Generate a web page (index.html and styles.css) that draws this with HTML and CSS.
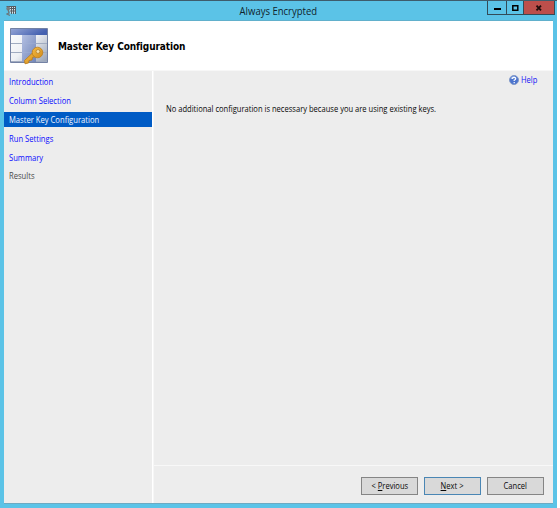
FILE: index.html
```
<!DOCTYPE html>
<html lang="en">
<head>
<meta charset="utf-8">
<title>Always Encrypted</title>
<link rel="stylesheet" href="styles.css">
</head>
<body>
<div class="window">
  <header class="titlebar">
    <svg class="app-icon" width="12" height="12" viewBox="0 0 12 12"><path d="M2.500 1h7v7.500h-5z" fill="#d8e4e8"/><path d="M.500 1.500h9.500M3 3.500h7M4 6h6M5.500 1v8M7.500 1v8M9.500 1v8" stroke="#555b60" fill="none"/><circle cx="2.200" cy="3.500" r="1.900" fill="#777e80"/><path d="M2 4l1 4-2 1 3 1.500" stroke="#6b777b" fill="none" stroke-width="1.300"/></svg>
    <h1 class="title"><span class="condensed">Always Encrypted</span></h1>
    <div class="controls">
      <span class="control"><svg width="8" height="8"><path d="M1 4h7v2H1z" fill="#000"/></svg></span>
      <span class="control maximize"><svg width="8" height="8"><path d="M1.800 1.800h5v4.400h-5z" fill="none" stroke="#000" stroke-width="1.500"/></svg></span>
      <span class="control close"><svg width="8" height="8"><path d="M1.500 1.700l4.500 4.600M6 1.700L1.500 6.300" stroke="#210b0a" stroke-width="1.900"/></svg></span>
    </div>
  </header>
  <div class="client">
    <div class="banner">
      <svg class="banner-icon" width="40" height="38" viewBox="0 0 40 38">
        <defs>
          <linearGradient id="head" x1="0" x2="1" y2=".3"><stop stop-color="#93a4d5"/><stop offset="1" stop-color="#4460b0"/></linearGradient>
          <linearGradient id="cells" gradientUnits="userSpaceOnUse" x2="38" y2="36"><stop stop-color="#fff"/><stop offset=".5" stop-color="#eef0f4"/><stop offset="1" stop-color="#929eb3"/></linearGradient>
          <linearGradient id="column" x2="1" y2="1"><stop stop-color="#b4c0e3"/><stop offset="1" stop-color="#7286b8"/></linearGradient>
          <linearGradient id="gold" x2="1" y2="1"><stop stop-color="#f6bd42"/><stop offset="1" stop-color="#d18a1b"/></linearGradient>
        </defs>
        <path d="M1.500 1.500h37v34h-37z" fill="#a0abc0" stroke="#7482a4"/>
        <path d="M2 2h36v6H2z" fill="url(#head)"/>
        <path d="M2 8h11v8H2zM2 17h11v8H2zM2 26h11v8H2zM27 8h11v8H27zM27 17h11v8H27zM27 26h11v8H27z" fill="url(#cells)"/>
        <path d="M13 8h14v27H13z" fill="url(#column)"/>
        <path d="M13 16.500h14M13 25.500h14" stroke="#a4b2d7" stroke-width=".4"/>
        <path d="M24 25.500L15.500 33.500l.5 3.300 3.500-.8.500-2.500 3-.5.500-2.500 4-1.500" fill="url(#gold)" stroke="#b97818" stroke-width=".8"/>
        <circle cx="28.500" cy="25.500" r="5.300" fill="url(#gold)" stroke="#bd7c19" stroke-width=".8"/>
        <circle cx="29" cy="24.500" r="1.900" fill="#f4e0ab" stroke="#a56b18" stroke-width=".6"/>
      </svg>
      <h2 class="heading">Master Key Configuration</h2>
    </div>
    <div class="body">
      <nav class="steps">
        <a class="step"><span class="condensed">Introduction</span></a>
        <a class="step"><span class="condensed">Column Selection</span></a>
        <a class="step active"><span class="condensed">Master Key Configuration</span></a>
        <a class="step"><span class="condensed">Run Settings</span></a>
        <a class="step"><span class="condensed">Summary</span></a>
        <a class="step disabled"><span class="condensed">Results</span></a>
      </nav>
      <main class="page">
        <div class="content">
          <a class="help"><svg width="10" height="10" viewBox="0 0 10 10"><circle cx="5" cy="5" r="4.500" fill="#4c74ce" stroke="#8299c8"/><path d="M1.500 3.500Q3 .8 6 1.200L3 4z" fill="#a8c4f3"/><path d="M3.300 3.900Q3.500 2.300 5.100 2.300 6.900 2.400 6.700 3.800 6.500 4.700 5.200 5.200V6M5.200 7v1.200" fill="none" stroke="#fff" stroke-width="1.200"/></svg><span class="condensed">Help</span></a>
          <p class="message"><span class="condensed">No additional configuration is necessary because you are using existing keys.</span></p>
        </div>
        <footer class="actions">
          <button class="button"><span class="condensed">&lt; <u>P</u>revious</span></button>
          <button class="button primary"><span class="condensed"><u>N</u>ext &gt;</span></button>
          <button class="button"><span class="condensed">Cancel</span></button>
        </footer>
      </main>
    </div>
  </div>
</div>
</body>
</html>
```
FILE: styles.css
```
* { box-sizing: border-box; }
body { margin: 0; background: #fff; font: 8.6px/12px "Open Sans", "Noto Sans", sans-serif; color: #080808; }
h1, h2, p { margin: 0; }
svg { display: block; flex: none; }
.condensed { display: inline-block; transform: scaleX(.88); transform-origin: left center; white-space: nowrap; }
.window { width: 557px; height: 508px; display: flex; flex-direction: column; background: #5bc3e7; border-top: 1px solid #3e5c6c; padding: 0 4px 4px; }
.titlebar { height: 20px; flex: none; display: grid; grid-template-columns: 150px 1fr 150px; border-bottom: 1px solid #61b0cc; }
.app-icon { margin: 4px 0 0 2px; }
.title { text-align: center; font-size: 10.4px; font-weight: 400; line-height: 20px; color: #10232c; }
.title .condensed, .button .condensed { transform-origin: center; }
.title .condensed { transform: scaleX(.915); }
.controls { display: flex; height: 14px; width: 68px; justify-self: end; margin-right: -2px; border: solid #334b57; border-width: 0 1px 1px; }
.control { width: 19px; display: flex; align-items: center; justify-content: center; border-right: 1px solid #334b57; }
.control.maximize { width: 17px; }
.control.close { flex: 1; background: #bd4f4b; border: 0; }
.client { flex: 1; display: flex; flex-direction: column; min-height: 0; background: #ededed; border-bottom: 1px solid #6baac3; }
.banner { height: 49px; flex: none; display: flex; background: #fff; padding: 6px 0 0 5px; }
.heading { font: bold 10px/14px "DejaVu Sans Condensed", "Open Sans", sans-serif; letter-spacing: -.1px; color: #000; margin: 13px 0 0 9px; white-space: nowrap; }
.body { flex: 1; display: flex; border-top: 1px solid #f7f7f7; }
.steps { width: 149px; flex: none; display: flex; flex-direction: column; gap: 3.8px; padding-top: 3.4px; border-right: 1px solid #fff; }
.step { height: 15px; line-height: 16px; padding-left: 4.5px; color: #0a0aff; }
.step .condensed { transform: scaleX(.887); }
.step.active { background: #005bc5; color: #f0f6ff; }
.step.disabled { color: #4a4a4a; }
.page { flex: 1; display: flex; flex-direction: column; border-left: 1px solid #f6f6f6; }
.content { flex: 1; display: flex; flex-direction: column; padding: 2px 13px 0 12px; }
.help { display: flex; align-items: center; gap: 2px; align-self: flex-end; color: #1515f5; height: 13px; }
.message { margin-top: 17px; }
.actions { height: 38px; flex: none; display: flex; justify-content: flex-end; gap: 6px; border-top: 1px solid #f8f8f8; padding: 11px 9px 0 0; }
.button { width: 57px; height: 18px; font: inherit; line-height: 16px; padding: 0; background: #d9d9d9; border: 1px solid #858585; color: #080808; }
.button.primary { border-color: #4a86b4; }
```
